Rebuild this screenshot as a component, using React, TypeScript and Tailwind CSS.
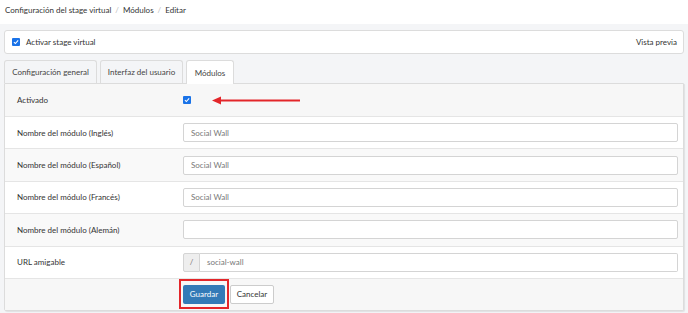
import React from "react";

function Check() {
  return (
    <span className="inline-flex w-[8px] h-[8px] items-center justify-center rounded-[1px] bg-[#1a73e8]">
      <svg width="6" height="6" viewBox="0 0 10 10">
        <path d="M1.5 5.2 L4 7.6 L8.6 2.4" stroke="white" strokeWidth="1.8" fill="none" />
      </svg>
    </span>
  );
}

function TextRow({ label, value, striped }: { label: string; value: string; striped?: boolean }) {
  return (
    <div className={`flex items-center h-[32.4px] border-t border-[#e5e5e5] ${striped ? "bg-[#f9f9f9]" : "bg-white"}`}>
      <div className="w-[178px] pl-[12px]">{label}</div>
      <div className="flex-1 pr-[5px]">
        <div className="h-[19px] border border-[#d4d4d4] rounded-[2px] bg-white pl-[7px] flex items-center text-[#777]">
          {value}
        </div>
      </div>
    </div>
  );
}

export default function App() {
  return (
    <div className="relative w-[688px] h-[313px] overflow-hidden bg-[#f4f5f7] text-[8px] text-[#333] font-['Lato',sans-serif]">
      <div className="h-[24px] bg-white pl-[5px] pt-[4px] flex gap-[4px]">
        <span>Configuración del stage virtual</span>
        <span className="text-[#bbb]">/</span>
        <span>Módulos</span>
        <span className="text-[#bbb]">/</span>
        <span>Editar</span>
      </div>

      <div className="mx-[4px] mt-[6px] h-[24px] bg-white border border-[#dcdcdc] rounded-[3px] flex items-center pl-[7px] pr-[6px]">
        <Check />
        <span className="ml-[6px]">Activar stage virtual</span>
        <span className="ml-auto">Vista previa</span>
      </div>

      <div className="mx-[4px] mt-[6px] flex items-end gap-[3px] h-[23px]">
        <div className="w-[93px] h-full flex items-center justify-center border border-[#dcdcdc] border-b-0 rounded-t-[3px] bg-[#f4f5f7] text-[#444]">
          Configuración general
        </div>
        <div className="w-[83px] h-full flex items-center justify-center border border-[#dcdcdc] border-b-0 rounded-t-[3px] bg-[#f4f5f7] text-[#444]">
          Interfaz del usuario
        </div>
        <div className="w-[48px] h-[24px] -mb-[1px] relative z-10 flex items-center justify-center border border-[#dcdcdc] border-b-0 rounded-t-[3px] bg-white text-[#444]">
          Módulos
        </div>
      </div>

      <div className="mx-[4px] border border-[#dcdcdc] rounded-b-[2px] bg-white shadow-[1px_1px_1px_rgba(0,0,0,0.08)]">
        <div className="flex items-center h-[32px] bg-[#f7f7f7]">
          <div className="w-[178px] pl-[12px]">Activado</div>
          <Check />
        </div>
        <TextRow label="Nombre del módulo (Inglés)" value="Social Wall" />
        <TextRow label="Nombre del módulo (Español)" value="Social Wall" striped />
        <TextRow label="Nombre del módulo (Francés)" value="Social Wall" />
        <TextRow label="Nombre del módulo (Alemán)" value="" striped />
        <div className="flex items-center h-[32.4px] border-t border-[#e5e5e5] bg-white">
          <div className="w-[178px] pl-[12px]">URL amigable</div>
          <div className="flex-1 pr-[5px] flex">
            <div className="w-[17px] h-[19px] border border-[#d4d4d4] rounded-l-[2px] bg-[#eee] flex items-center justify-center text-[#777]">
              /
            </div>
            <div className="flex-1 h-[19px] border border-l-0 border-[#d4d4d4] rounded-r-[2px] bg-white pl-[7px] flex items-center text-[#777]">
              social-wall
            </div>
          </div>
        </div>
        <div className="flex items-start h-[32px] border-t border-[#e5e5e5] bg-[#f7f7f7] pl-[174px]">
          <div className="border-2 border-[#e3262a] px-[2px] pt-[4px] pb-[3px]">
            <div className="w-[42px] h-[19px] rounded-[2px] bg-[#337ab7] text-white flex items-center justify-center">
              Guardar
            </div>
          </div>
          <div className="ml-[1px] mt-[6px] w-[44px] h-[19px] rounded-[2px] border border-[#ccc] bg-white flex items-center justify-center">
            Cancelar
          </div>
        </div>
      </div>

      <svg className="absolute left-[212px] top-[96px]" width="90" height="9" viewBox="0 0 90 9">
        <path d="M7 4.5 H88" stroke="#e3262a" strokeWidth="2" />
        <path d="M0 4.5 L9 0.5 L9 8.5 Z" fill="#e3262a" />
      </svg>
    </div>
  );
}
